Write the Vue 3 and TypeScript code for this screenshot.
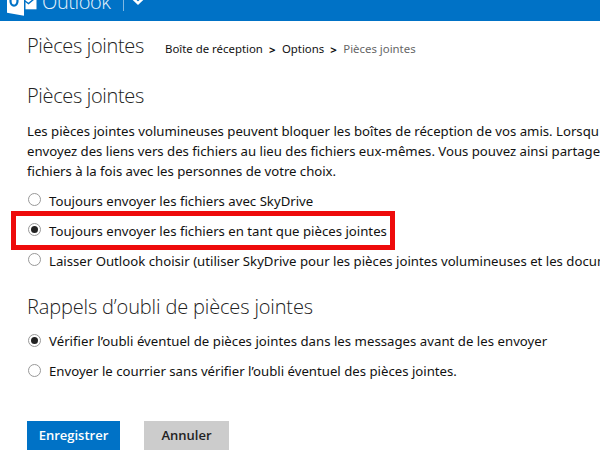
<script setup lang="ts">
import { ref } from 'vue'

interface Choice {
  id: string
  label: string
}

const sendChoices: Choice[] = [
  { id: 'skydrive', label: 'Toujours envoyer les fichiers avec SkyDrive' },
  { id: 'attach', label: 'Toujours envoyer les fichiers en tant que pièces jointes' },
  { id: 'auto', label: 'Laisser Outlook choisir (utiliser SkyDrive pour les pièces jointes volumineuses et les docum' },
]
const reminderChoices: Choice[] = [
  { id: 'check', label: 'Vérifier l’oubli éventuel de pièces jointes dans les messages avant de les envoyer' },
  { id: 'skip', label: 'Envoyer le courrier sans vérifier l’oubli éventuel des pièces jointes.' },
]
const intro: string[] = [
  'Les pièces jointes volumineuses peuvent bloquer les boîtes de réception de vos amis. Lorsqu',
  'envoyez des liens vers des fichiers au lieu des fichiers eux-mêmes. Vous pouvez ainsi partage',
  'fichiers à la fois avec les personnes de votre choix.',
]
const sendMode = ref('attach')
const reminder = ref('check')
</script>

<template>
  <div class="page">
    <header class="bar">
      <svg class="logo" width="37" height="21" viewBox="0 0 37 21">
        <path d="M7 0H24V15.7L7 12.7Z" fill="#fff" />
        <path d="M25.5 0H36.5V9.3H25.5Z" fill="#fff" />
        <ellipse cx="14" cy="1" rx="3.5" ry="4.7" fill="none" stroke="#0072c6" stroke-width="2.2" />
        <path d="M25 1L28.5 3.6L34 -1" fill="none" stroke="#0072c6" stroke-width="1.4" />
      </svg>
      <span class="brand">Outlook</span>
      <i class="divider"></i>
      <svg class="chevron" width="12" height="8" viewBox="0 0 12 8">
        <path d="M1 -1.5L6 3.2L11 -1.5" fill="none" stroke="#fff" stroke-width="2.6" />
      </svg>
    </header>
    <main>
      <div class="top">
        <h1>Pièces jointes</h1>
        <nav>
          <a>Boîte de réception</a><b>&gt;</b><a>Options</a><b>&gt;</b><span>Pièces jointes</span>
        </nav>
      </div>
      <h2 class="first">Pièces jointes</h2>
      <p class="intro"><span v-for="(l, i) in intro" :key="i" :class="'line-' + i">{{ l }}</span></p>
      <div class="choices">
        <div v-for="c in sendChoices" :key="c.id" :class="['choice', c.id]" @click="sendMode = c.id">
          <i :class="['radio', { on: sendMode === c.id }]"></i><span>{{ c.label }}</span>
        </div>
      </div>
      <h2 class="second">Rappels d’oubli de pièces jointes</h2>
      <div class="choices reminders">
        <div v-for="c in reminderChoices" :key="c.id" :class="['choice', c.id]" @click="reminder = c.id">
          <i :class="['radio', { on: reminder === c.id }]"></i><span>{{ c.label }}</span>
        </div>
      </div>
      <div class="actions">
        <button class="save">Enregistrer</button>
        <button class="cancel">Annuler</button>
      </div>
    </main>
  </div>
</template>

<style>
body { background: #fff; overflow: hidden; }
</style>

<style scoped>
.page { width: 600px; height: 450px; overflow: hidden; color: #111; font: 13.2px/20px "Noto Sans", "Open Sans", sans-serif; }
.bar { height: 21px; background: #0072c6; display: flex; align-items: flex-start; overflow: hidden; }
.logo { flex: none; margin-right: 5px; }
.brand { color: #e4f1fb; font: 300 20px/24px "Open Sans", sans-serif; letter-spacing: -0.4px; margin-top: -10px; width: 72px; white-space: nowrap; }
.divider { width: 1px; height: 11px; background: #80b8e2; margin: 0 8px 0 9px; }
.chevron { display: block; }
main { padding: 0 0 0 27px; }
.top { display: flex; height: 50px; align-items: flex-start; padding-top: 11px; box-sizing: border-box; }
h1, h2 { margin: 0; font: 300 20px/28px "Open Sans", sans-serif; color: #222; white-space: nowrap; }
h1, .first { letter-spacing: -0.35px; }
h1 { width: 138px; }
nav { display: flex; font-size: 11.4px; line-height: 20px; padding-top: 7px; white-space: nowrap; }
nav b { margin: 0 6px; padding-top: 1px; width: 7px; font-weight: 700; }
nav span { color: #666; }
.first { margin-top: 11px; }
.intro { margin: 11px 0 5px; }
.intro span { display: block; white-space: nowrap; }
.line-0 { letter-spacing: -0.01px; }
.line-1 { letter-spacing: -0.015px; }
.line-2 { letter-spacing: -0.03px; }
.choice { height: 30px; display: flex; align-items: center; white-space: nowrap; box-sizing: border-box; }
.check { letter-spacing: 0.02px; }
.attach { position: relative; }
.attach::before { content: ""; position: absolute; left: -16px; top: -5px; width: 384px; height: 39px; box-sizing: border-box; border: 5px solid #ee0b0b; }
.radio { width: 13px; height: 13px; box-sizing: border-box; border: 1px solid #999; border-radius: 50%; margin: -3px 8px 0 1px; flex: none; display: flex; align-items: center; justify-content: center; background: #fff; }
.radio.on::after { content: ""; width: 7px; height: 7px; border-radius: 50%; background: #222; }
.second { margin: 17px 0 5px; letter-spacing: -0.15px; }
.reminders .radio { margin-top: -1px; }
.actions { display: flex; gap: 24px; margin-top: 35px; }
button { border: 0; padding: 0; height: 29px; font: 600 13px/29px "Open Sans", sans-serif; }
.save { background: #0072c6; color: #fff; width: 93px; }
.cancel { background: #ccc; color: #222; width: 85px; }
</style>
